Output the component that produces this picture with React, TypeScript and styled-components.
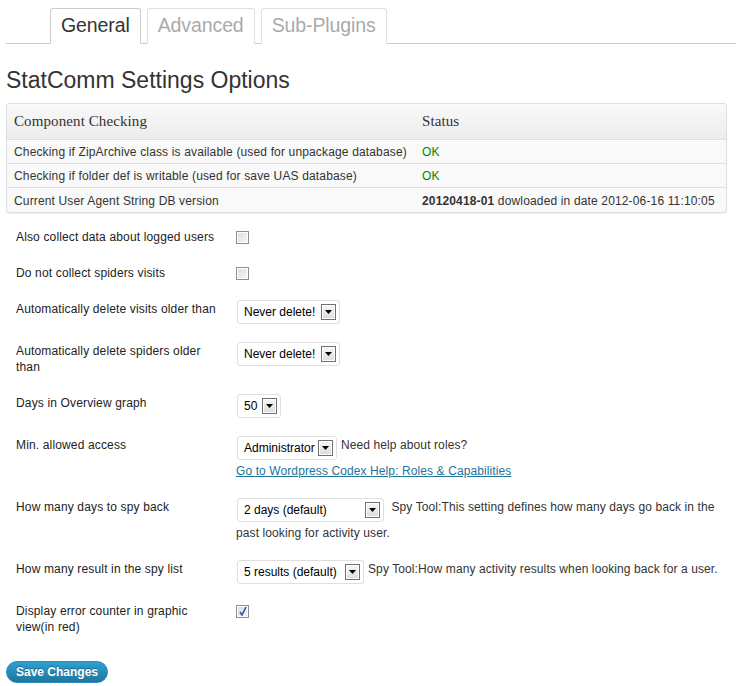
import React from "react";
import styled, { createGlobalStyle } from "styled-components";

const Global = createGlobalStyle`
  html, body { margin: 0; padding: 0; background: #fff; }
  body { font-family: "Liberation Sans", Arial, sans-serif; font-size: 12px; color: #333; letter-spacing: 0.15px; }
  * { box-sizing: border-box; }
`;

const Wrap = styled.div`
  padding: 8px 9px 0 6px;
`;

const TabBar = styled.nav`
  display: flex;
  align-items: flex-end;
  gap: 6px;
  padding-left: 44px;
  height: 36px;
  border-bottom: 1px solid #ccc;
  margin-right: -9px;
`;

const Tab = styled.a<{ $active?: boolean }>`
  display: block;
  height: 36px;
  margin-bottom: -1px;
  padding: 4px 10px 7px;
  line-height: 24px;
  font-size: 19.5px;
  letter-spacing: -0.1px;
  text-decoration: none;
  border: 1px solid ${(p) => (p.$active ? "#ccc" : "#dfdfdf")};
  border-bottom: ${(p) => (p.$active ? "1px solid #fff" : "0")};
  border-radius: 3px 3px 0 0;
  background: #fff;
  color: ${(p) => (p.$active ? "#333" : "#aaa")};
`;

const Title = styled.h2`
  margin: 22px 0 8px;
  font-size: 23px;
  line-height: 29px;
  font-weight: normal;
  letter-spacing: 0;
  color: #333;
`;

const Table = styled.table`
  width: 100%;
  border-spacing: 0;
  border: 1px solid #dfdfdf;
  border-radius: 3px;
  background: #f9f9f9;
  box-shadow: 0 1px 1px rgba(0, 0, 0, 0.06);
`;

const Th = styled.th<{ $w?: number }>`
  text-align: left;
  font-family: "Liberation Serif", "Times New Roman", serif;
  font-size: 15px;
  font-weight: normal;
  letter-spacing: 0.1px;
  color: #333;
  height: 36px;
  padding: 0 7px;
  border-bottom: 1px solid #dfdfdf;
  background: linear-gradient(to top, #ececec, #f9f9f9);
  width: ${(p) => (p.$w ? `${p.$w}px` : "auto")};
  &:first-child { border-top-left-radius: 3px; }
  &:last-child { border-top-right-radius: 3px; }
`;

const Td = styled.td<{ $last?: boolean }>`
  height: 24px;
  padding: 0 7px;
  font-size: 12px;
  line-height: 16px;
  color: #333;
  border-top: 1px solid #fff;
  border-bottom: ${(p) => (p.$last ? "0" : "1px solid #dfdfdf")};
  vertical-align: middle;
  white-space: nowrap;
`;

const Ok = styled.span`
  color: #008a00;
`;

const Form = styled.div`
  margin-top: 6px;
  display: flex;
  flex-direction: column;
`;

const Row = styled.div`
  display: grid;
  grid-template-columns: 220px 1fr;
`;

const Label = styled.div`
  padding: 10px;
  line-height: 16px;
  font-size: 12px;
  color: #222;
`;

const Field = styled.div`
  padding: 8px 6px 8px 10px;
  line-height: 20px;
  font-size: 12px;
  letter-spacing: 0.1px;
  color: #333;
`;

const Check = styled.span<{ $checked?: boolean }>`
  display: inline-block;
  vertical-align: top;
  margin-top: 4px;
  width: 13px;
  height: 13px;
  border: 1px solid #8f8f8f;
  background: linear-gradient(135deg, #dcdcdc, #f8f8f8);
  box-shadow: inset 0 0 0 1px #fff;
  position: relative;
  svg { position: absolute; left: 1px; top: 0px; }
`;

const Select = styled.span<{ $w: number }>`
  display: inline-flex;
  align-items: center;
  justify-content: space-between;
  vertical-align: top;
  width: ${(p) => p.$w}px;
  height: 24px;
  margin: 1px 4px 1px 1px;
  padding: 0 3px 0 6px;
  border: 1px solid #dfdfdf;
  border-radius: 3px;
  background: #fff;
  color: #000;
  font-size: 12px;
  letter-spacing: 0;
  white-space: nowrap;
`;

const Arrow = styled.span`
  display: inline-flex;
  align-items: center;
  justify-content: center;
  width: 15px;
  height: 16px;
  border: 1px solid #707070;
  background: linear-gradient(#f6f6f6, #dcdcdc);
  box-shadow: inset 0 0 0 1px #fff;
  flex: none;
`;

const HelpLink = styled.a`
  color: #21759b;
  text-decoration: underline;
`;

const Submit = styled.div`
  margin-top: 16px;
  padding-bottom: 3px;
`;

const Button = styled.button`
  height: 22px;
  padding: 0 9px;
  border: 1px solid #298cba;
  border-radius: 11px;
  background: linear-gradient(#2e9fd2, #21759b);
  color: #fff;
  font-family: "Liberation Sans", Arial, sans-serif;
  font-size: 12px;
  font-weight: bold;
  letter-spacing: 0;
  line-height: 20px;
  text-shadow: 0 -1px 0 rgba(0, 0, 0, 0.3);
  cursor: pointer;
`;

const Dropdown: React.FC<{ value: string; w: number }> = ({ value, w }) => (
  <Select $w={w}>
    <span>{value}</span>
    <Arrow>
      <svg width="7" height="4" viewBox="0 0 7 4">
        <path d="M0 0h7L3.5 4z" fill="#000" />
      </svg>
    </Arrow>
  </Select>
);

const CheckBox: React.FC<{ checked?: boolean }> = ({ checked }) => (
  <Check $checked={checked}>
    {checked && (
      <svg width="10" height="11" viewBox="0 0 10 11">
        <path d="M2 6 L4 9 L8 1" stroke="#2a4fb8" strokeWidth="1.6" fill="none" />
      </svg>
    )}
  </Check>
);

export default function App() {
  return (
    <>
      <Global />
      <Wrap>
        <TabBar>
          <Tab $active>General</Tab>
          <Tab>Advanced</Tab>
          <Tab>Sub-Plugins</Tab>
        </TabBar>
        <Title>StatComm Settings Options</Title>
        <Table>
          <thead>
            <tr>
              <Th $w={408}>Component Checking</Th>
              <Th>Status</Th>
            </tr>
          </thead>
          <tbody>
            <tr>
              <Td>Checking if ZipArchive class is available (used for unpackage database)</Td>
              <Td><Ok>OK</Ok></Td>
            </tr>
            <tr>
              <Td>Checking if folder def is writable (used for save UAS database)</Td>
              <Td><Ok>OK</Ok></Td>
            </tr>
            <tr>
              <Td $last>Current User Agent String DB version</Td>
              <Td $last><b>20120418-01</b> dowloaded in date 2012-06-16 11:10:05</Td>
            </tr>
          </tbody>
        </Table>
        <Form>
          <Row>
            <Label>Also collect data about logged users</Label>
            <Field><CheckBox /></Field>
          </Row>
          <Row>
            <Label>Do not collect spiders visits</Label>
            <Field><CheckBox /></Field>
          </Row>
          <Row>
            <Label>Automatically delete visits older than</Label>
            <Field><Dropdown value="Never delete!" w={103} /></Field>
          </Row>
          <Row>
            <Label>Automatically delete spiders older than</Label>
            <Field><Dropdown value="Never delete!" w={103} /></Field>
          </Row>
          <Row>
            <Label>Days in Overview graph</Label>
            <Field><Dropdown value="50" w={44} /></Field>
          </Row>
          <Row>
            <Label>Min. allowed access</Label>
            <Field>
              <Dropdown value="Administrator" w={100} />Need help about roles?
              <br />
              <HelpLink href="#">Go to Wordpress Codex Help: Roles &amp; Capabilities</HelpLink>
            </Field>
          </Row>
          <Row>
            <Label>How many days to spy back</Label>
            <Field>
              <Dropdown value="2 days (default)" w={147} /> Spy Tool:This setting defines how many days go back in the past looking for activity user.
            </Field>
          </Row>
          <Row>
            <Label>How many result in the spy list</Label>
            <Field>
              <Dropdown value="5 results (default)" w={127} />Spy Tool:How many activity results when looking back for a user.
            </Field>
          </Row>
          <Row>
            <Label>Display error counter in graphic view(in red)</Label>
            <Field><CheckBox checked /></Field>
          </Row>
        </Form>
        <Submit>
          <Button>Save Changes</Button>
        </Submit>
      </Wrap>
    </>
  );
}
